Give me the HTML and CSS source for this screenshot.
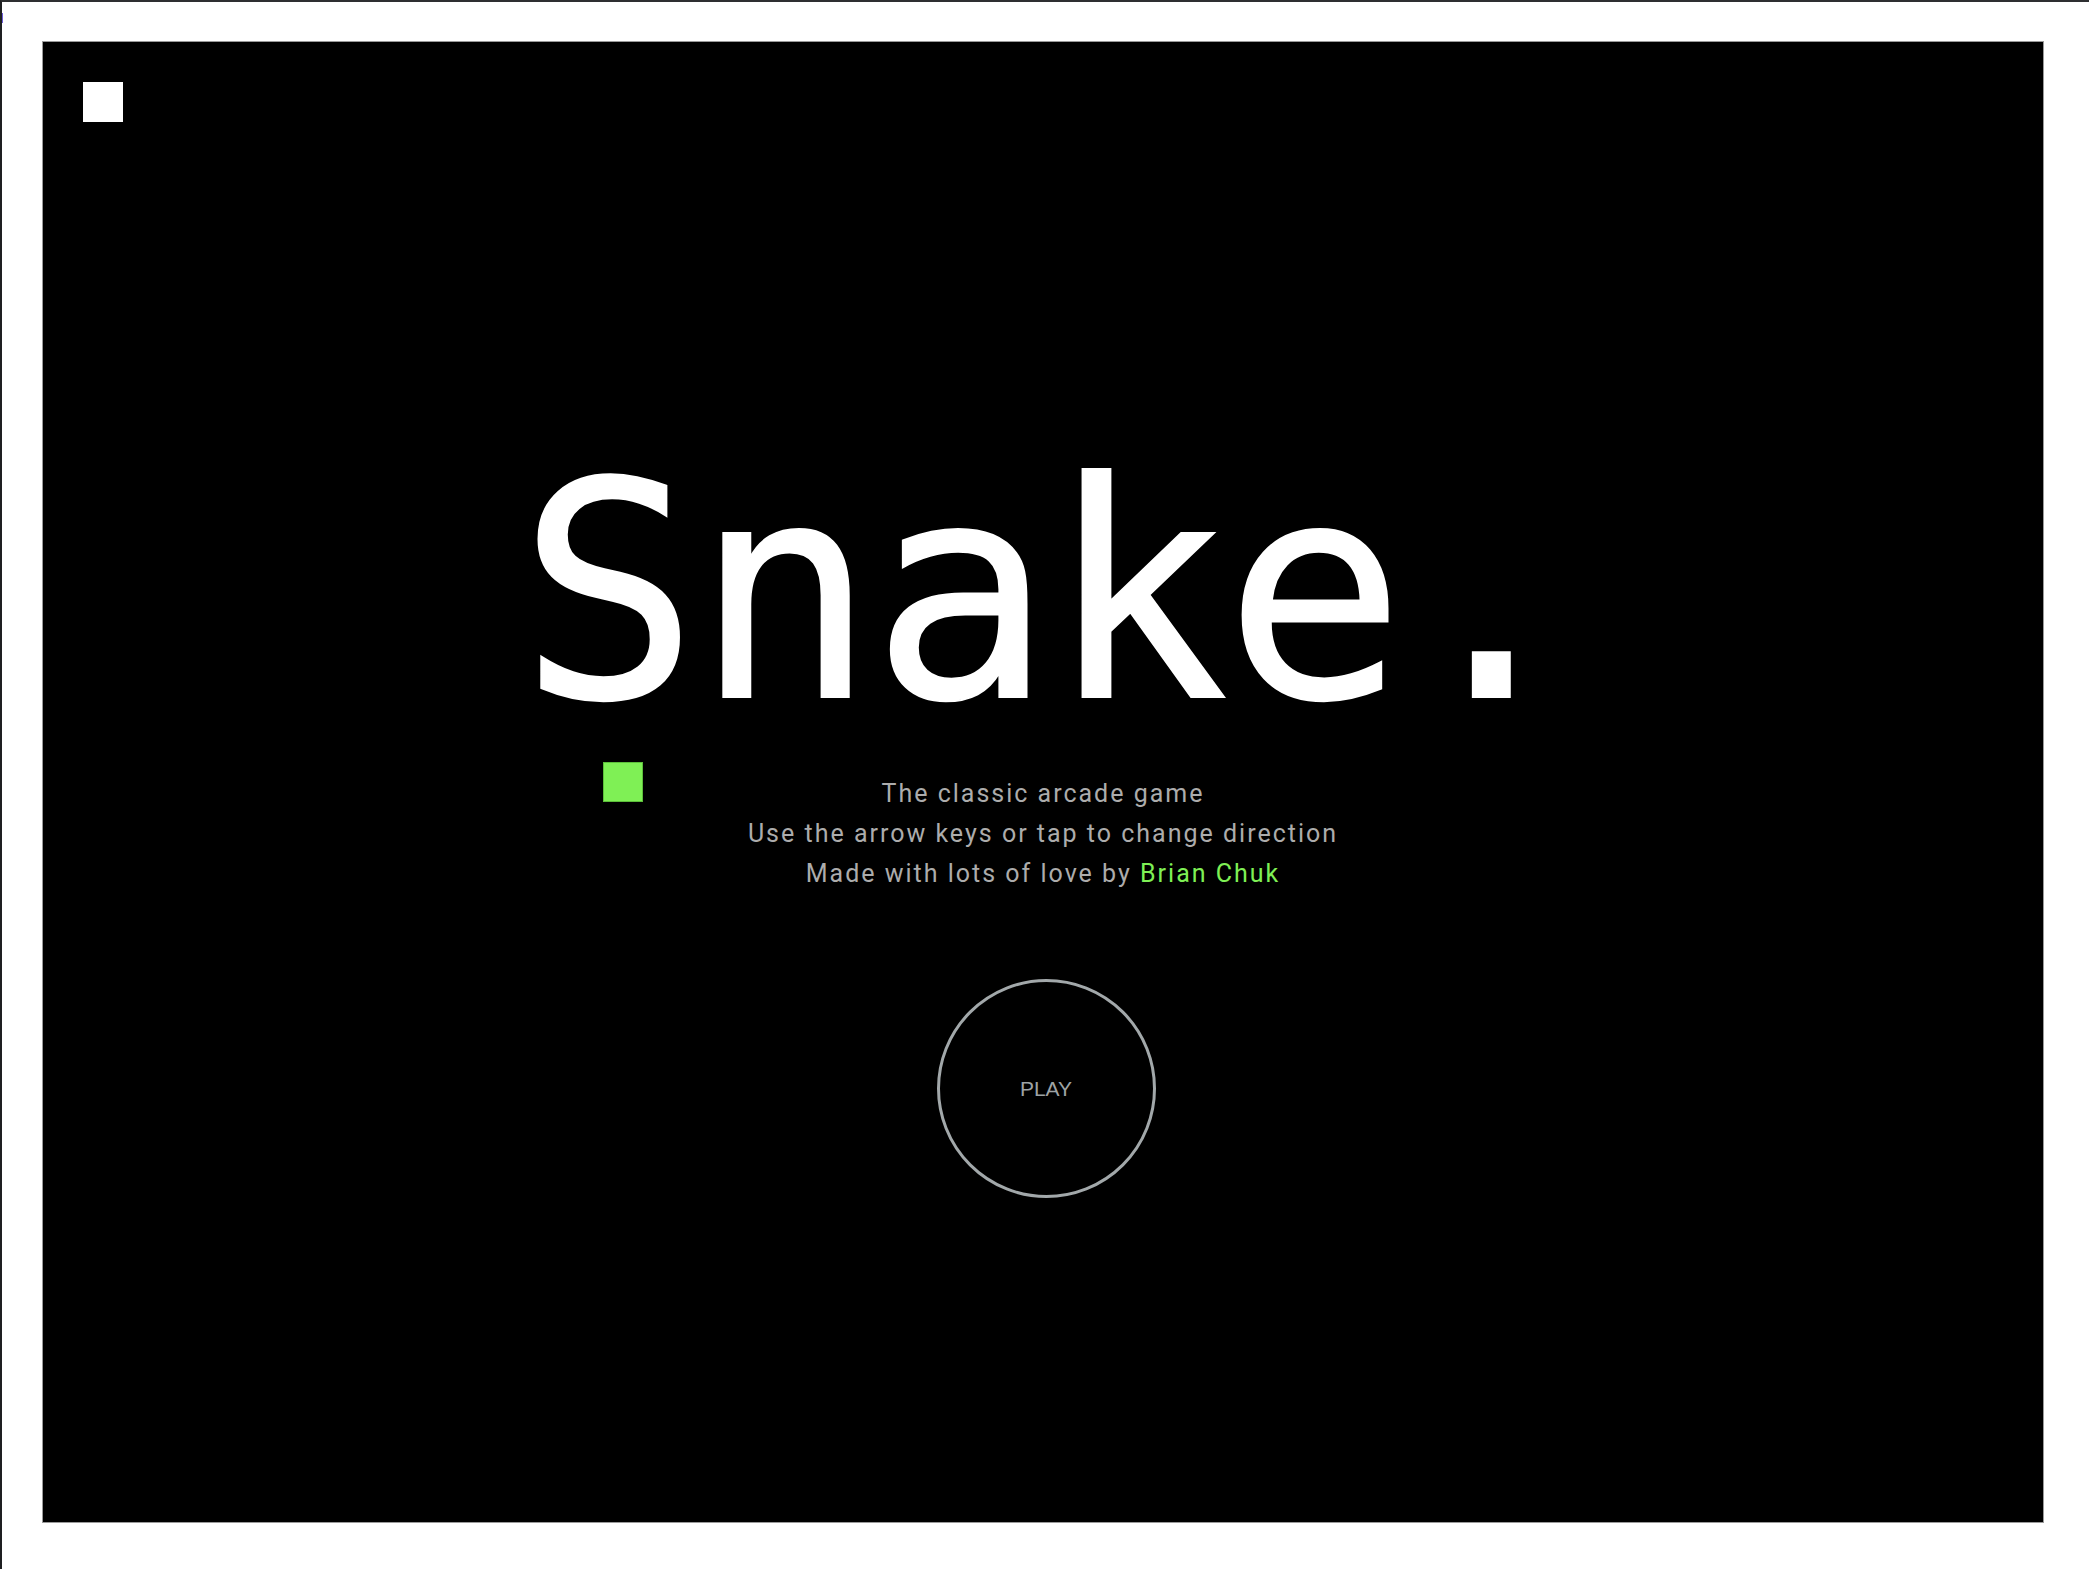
FILE: index.html
```html
<!DOCTYPE html>
<html lang="en">
<head>
<meta charset="utf-8">
<title>Snake.</title>
<link rel="stylesheet" href="styles.css">
</head>
<body>
<span class="edge-mark"></span>
<main class="board">
  <div class="cell cell-head"></div>
  <div class="cell cell-food"></div>
  <section class="intro">
    <h1 class="title">Snake.</h1>
    <div class="blurb">
      <p>The classic arcade game</p>
      <p>Use the arrow keys or tap to change direction</p>
      <p>Made with lots of love by <a class="author" href="#">Brian Chuk</a></p>
    </div>
    <button class="play" type="button">PLAY</button>
  </section>
</main>
</body>
</html>
```

FILE: styles.css
```css
html, body {
  margin: 0;
  padding: 0;
}
body {
  background: #ffffff;
  border-top: 2px solid #2e2f31;
  border-left: 2px solid #1e1f21;
  min-height: 1569px;
  box-sizing: border-box;
  position: relative;
}
.edge-mark {
  position: absolute;
  left: -2px;
  top: 11px;
  width: 3px;
  height: 10px;
  background: #6b5bd6;
}
.board {
  position: relative;
  width: 2000px;
  height: 1480px;
  margin: 40px 0 0 41px;
  background: #000000;
  outline: 1px solid #9a9a9a;
}
.cell {
  position: absolute;
  width: 40px;
  height: 40px;
}
.cell-head {
  left: 40px;
  top: 40px;
  background: #ffffff;
}
.cell-food {
  left: 560px;
  top: 720px;
  background: #7ff055;
  box-shadow: inset 0 0 0 1px #5cbf3a;
}
.intro {
  display: flex;
  flex-direction: column;
  align-items: center;
  padding-top: 402px;
}
.title {
  margin: 0 0 0 10px;
  font-family: "DejaVu Sans Mono", monospace;
  font-weight: normal;
  font-size: 300px;
  line-height: 300px;
  letter-spacing: -4px;
  color: #ffffff;
  -webkit-text-stroke: 2px #ffffff;
}
.blurb {
  margin-top: 30px;
  font-family: Roboto, "Liberation Sans", sans-serif;
  font-size: 25px;
  line-height: 40px;
  letter-spacing: 2px;
  color: #acacac;
  text-align: center;
}
.blurb p {
  margin: 0;
}
.author {
  color: #7ff055;
  text-decoration: none;
}
.play {
  margin-top: 85px;
  margin-left: 6px;
  width: 219px;
  height: 219px;
  border-radius: 50%;
  border: 3px solid #a2a8aa;
  background: transparent;
  color: #9ea3a5;
  font-family: "Liberation Sans", Arial, sans-serif;
  font-size: 21px;
  padding: 0;
}
```
